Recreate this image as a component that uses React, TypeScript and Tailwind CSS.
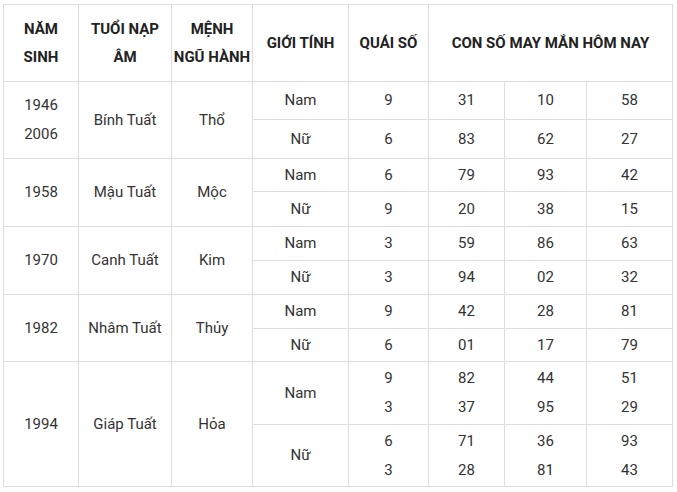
const font = { fontFamily: 'Roboto, "Noto Sans", sans-serif' }

interface Sub {
  gender: string
  quai: string[]
  nums: string[][]
  h: string
}

interface Group {
  years: string[]
  tuoi: string
  menh: string
  subs: Sub[]
}

const groups: Group[] = [
  {
    years: ['1946', '2006'],
    tuoi: 'Bính Tuất',
    menh: 'Thổ',
    subs: [
      { gender: 'Nam', quai: ['9'], nums: [['31', '10', '58']], h: 'h-[38px]' },
      { gender: 'Nữ', quai: ['6'], nums: [['83', '62', '27']], h: 'h-[39px]' },
    ],
  },
  {
    years: ['1958'],
    tuoi: 'Mậu Tuất',
    menh: 'Mộc',
    subs: [
      { gender: 'Nam', quai: ['6'], nums: [['79', '93', '42']], h: 'h-[33px]' },
      { gender: 'Nữ', quai: ['9'], nums: [['20', '38', '15']], h: 'h-[35px]' },
    ],
  },
  {
    years: ['1970'],
    tuoi: 'Canh Tuất',
    menh: 'Kim',
    subs: [
      { gender: 'Nam', quai: ['3'], nums: [['59', '86', '63']], h: 'h-[34px]' },
      { gender: 'Nữ', quai: ['3'], nums: [['94', '02', '32']], h: 'h-[34px]' },
    ],
  },
  {
    years: ['1982'],
    tuoi: 'Nhâm Tuất',
    menh: 'Thủy',
    subs: [
      { gender: 'Nam', quai: ['9'], nums: [['42', '28', '81']], h: 'h-[34px]' },
      { gender: 'Nữ', quai: ['6'], nums: [['01', '17', '79']], h: 'h-[33px]' },
    ],
  },
  {
    years: ['1994'],
    tuoi: 'Giáp Tuất',
    menh: 'Hỏa',
    subs: [
      {
        gender: 'Nam',
        quai: ['9', '3'],
        nums: [
          ['82', '44', '51'],
          ['37', '95', '29'],
        ],
        h: 'h-[63px]',
      },
      {
        gender: 'Nữ',
        quai: ['6', '3'],
        nums: [
          ['71', '36', '93'],
          ['28', '81', '43'],
        ],
        h: 'h-[62px]',
      },
    ],
  },
]

const td = 'border border-[#dddddd] text-center align-middle p-0'

function Lines({ items }: { items: string[] }) {
  return (
    <>
      {items.map((t, i) => (
        <div key={i} className="leading-[29px]">
          {t}
        </div>
      ))}
    </>
  )
}

export default function App() {
  return (
    <div className="bg-white w-[677px] h-[492px] pt-[4px] pl-[3px]" style={font}>
      <table className="border-collapse table-fixed w-[669px] text-[15px] text-[#333333]">
        <colgroup>
          <col className="w-[75px]" />
          <col className="w-[93px]" />
          <col className="w-[81px]" />
          <col className="w-[96px]" />
          <col className="w-[80px]" />
          <col className="w-[76px]" />
          <col className="w-[82px]" />
          <col className="w-[86px]" />
        </colgroup>
        <thead>
          <tr className="h-[77px] font-bold text-[#222222] leading-[28px]">
            <th className={td}>
              NĂM
              <br />
              SINH
            </th>
            <th className={td}>
              TUỔI NẠP
              <br />
              ÂM
            </th>
            <th className={td}>
              MỆNH
              <br />
              NGŨ HÀNH
            </th>
            <th className={td}>GIỚI TÍNH</th>
            <th className={td}>QUÁI SỐ</th>
            <th className={td} colSpan={3}>
              CON SỐ MAY MẮN HÔM NAY
            </th>
          </tr>
        </thead>
        <tbody>
          {groups.map((g) =>
            g.subs.map((s, si) => (
              <tr key={g.tuoi + si} className={s.h}>
                {si === 0 && (
                  <>
                    <td className={td} rowSpan={2}>
                      <Lines items={g.years} />
                    </td>
                    <td className={td} rowSpan={2}>
                      {g.tuoi}
                    </td>
                    <td className={td} rowSpan={2}>
                      {g.menh}
                    </td>
                  </>
                )}
                <td className={td}>{s.gender}</td>
                <td className={td}>
                  <Lines items={s.quai} />
                </td>
                {[0, 1, 2].map((c) => (
                  <td key={c} className={td}>
                    <Lines items={s.nums.map((r) => r[c])} />
                  </td>
                ))}
              </tr>
            ))
          )}
        </tbody>
      </table>
    </div>
  )
}
